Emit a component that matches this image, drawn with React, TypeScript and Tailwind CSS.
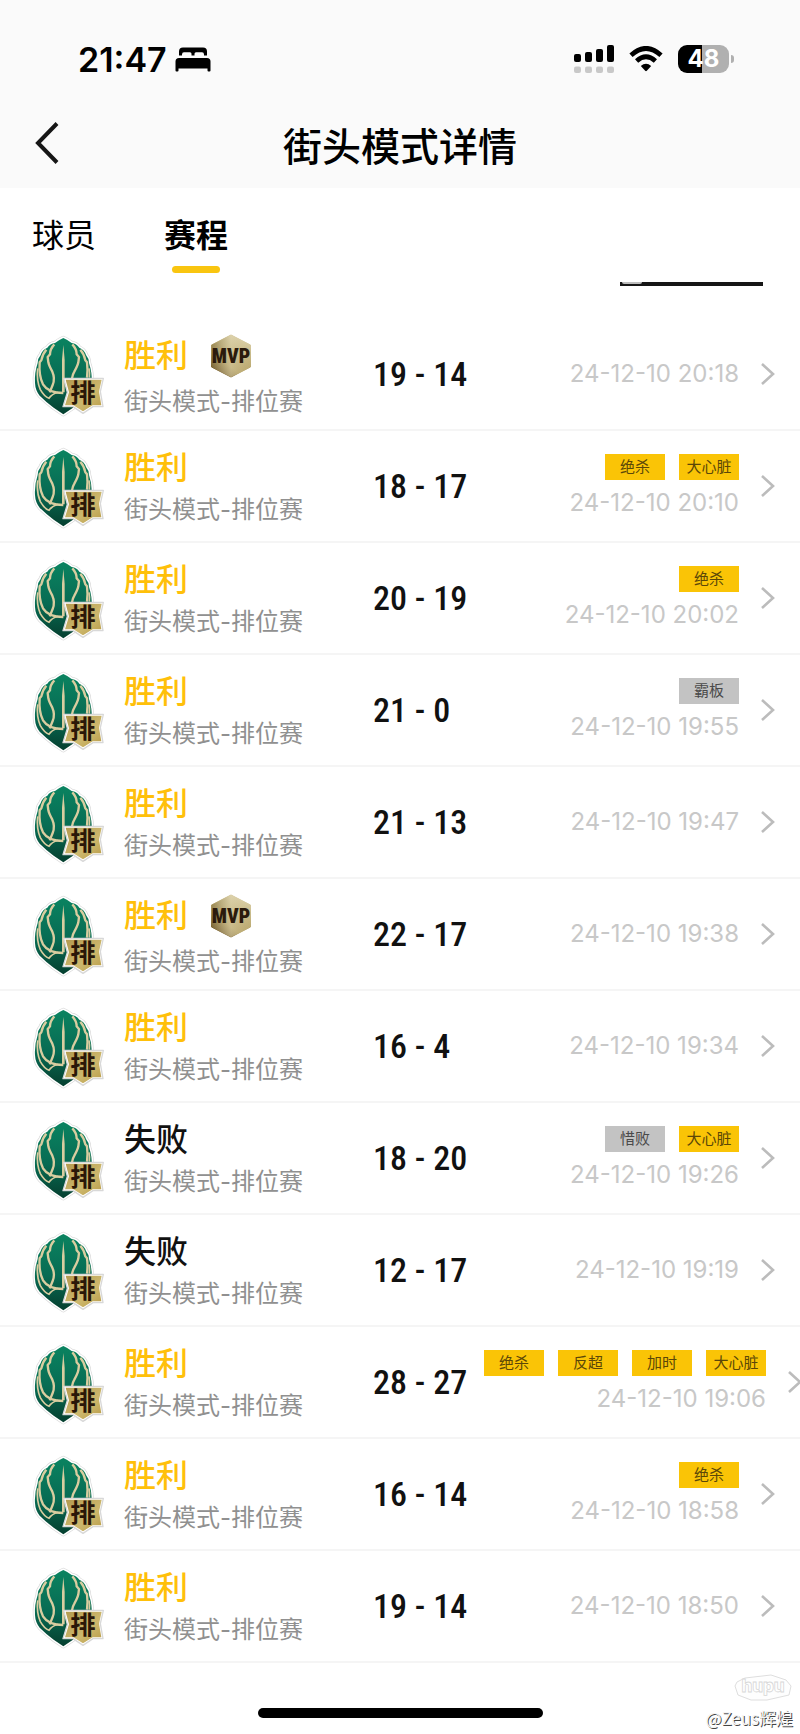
type Tag = { text: string; muted?: boolean };

type Match = {
  won: boolean;
  mvp?: boolean;
  score: string;
  time: string;
  tags?: Tag[];
};

const matches: Match[] = [
  { won: true, mvp: true, score: "19 - 14", time: "24-12-10 20:18" },
  { won: true, score: "18 - 17", time: "24-12-10 20:10", tags: [{ text: "绝杀" }, { text: "大心脏" }] },
  { won: true, score: "20 - 19", time: "24-12-10 20:02", tags: [{ text: "绝杀" }] },
  { won: true, score: "21 - 0", time: "24-12-10 19:55", tags: [{ text: "霸板", muted: true }] },
  { won: true, score: "21 - 13", time: "24-12-10 19:47" },
  { won: true, mvp: true, score: "22 - 17", time: "24-12-10 19:38" },
  { won: true, score: "16 - 4", time: "24-12-10 19:34" },
  { won: false, score: "18 - 20", time: "24-12-10 19:26", tags: [{ text: "惜败", muted: true }, { text: "大心脏" }] },
  { won: false, score: "12 - 17", time: "24-12-10 19:19" },
  {
    won: true,
    score: "28 - 27",
    time: "24-12-10 19:06",
    tags: [{ text: "绝杀" }, { text: "反超" }, { text: "加时" }, { text: "大心脏" }],
  },
  { won: true, score: "16 - 14", time: "24-12-10 18:58", tags: [{ text: "绝杀" }] },
  { won: true, score: "19 - 14", time: "24-12-10 18:50" },
];

function BedIcon() {
  return (
    <svg viewBox="0 0 36 25" className="h-[25px] w-9" aria-hidden="true">
      <path d="M4 8.500V4.500Q4 0.500 8 0.500H28Q32 0.500 32 4.500V8.500H29V7.500Q29 5.300 27 5.300H21Q19.500 5.300 19.500 6.800V8.500H16.500V6.800Q16.500 5.300 15 5.300H9Q7 5.300 7 7.500V8.500Z" />
      <path d="M0.500 14.500Q0.500 11 4 11H32Q35.500 11 35.500 14.500V23.500Q35.500 24.500 34.500 24.500H33.500Q32.500 24.500 32.500 23.500V21.500H3.500V23.500Q3.500 24.500 2.500 24.500H1.500Q0.500 24.500 0.500 23.500Z" />
    </svg>
  );
}

function SignalIcon() {
  return (
    <svg viewBox="0 0 40 28" className="h-7 w-10" aria-hidden="true">
      <rect x="0" y="9" width="7" height="8" rx="2" />
      <rect x="11" y="7" width="7" height="10" rx="2" />
      <rect x="22" y="4" width="7" height="13" rx="2" />
      <rect x="33" y="0" width="7" height="17" rx="2" />
      <g fill="#c8c8c8">
        <rect x="0" y="21.500" width="7" height="6.500" rx="2" />
        <rect x="11" y="21.500" width="7" height="6.500" rx="2" />
        <rect x="22" y="21.500" width="7" height="6.500" rx="2" />
        <rect x="33" y="21.500" width="7" height="6.500" rx="2" />
      </g>
    </svg>
  );
}

function WifiIcon() {
  return (
    <svg viewBox="0 0 34 26" className="h-[26px] w-[34px]" aria-hidden="true">
      <path d="M2 9.200Q17 -4.400 32 9.200" fill="none" stroke="#000" strokeWidth="4.800" />
      <path d="M7.600 15Q17 6.600 26.400 15" fill="none" stroke="#000" strokeWidth="4.800" />
      <path d="M11.800 20Q17 15.400 22.200 20L17.800 24.800Q17 25.600 16.200 24.800Z" />
    </svg>
  );
}

function Battery() {
  return (
    <div className="flex items-center gap-0.5">
      <div className="flex h-7 w-[51px] items-center justify-center rounded-[9px] bg-linear-to-r from-black from-48% to-[#b0b0b0] to-48% text-2xl leading-7 font-bold text-white">
        48
      </div>
      <span className="h-2 w-[3px] rounded-r-full bg-[#b0b0b0]" />
    </div>
  );
}

const LEAF =
  "M131 25Q117 31 106 40Q91 42 83 54Q68 60 63 76Q54 86 54 100Q44 130 46 160Q47 182 60 198Q78 216 102 234L131 254L160 234Q184 216 202 198Q215 182 216 160Q218 130 208 100Q208 86 199 76Q194 60 179 54Q171 42 156 40Q145 31 131 25Z";

function Emblem() {
  return (
    <svg viewBox="40 13 216 240" className="h-20 w-[72px] shrink-0 overflow-visible" aria-hidden="true">
      <defs>
        <linearGradient id="leaf" x1="0" y1="0" x2="0" y2="1">
          <stop offset="0" stopColor="#0a8360" />
          <stop offset="0.55" stopColor="#086b53" />
          <stop offset="1" stopColor="#053f2f" />
        </linearGradient>
        <linearGradient id="ribbon" x1="0" y1="0" x2="1" y2="1">
          <stop offset="0" stopColor="#b39a50" />
          <stop offset="0.6" stopColor="#cdb86d" />
          <stop offset="1" stopColor="#b89b48" />
        </linearGradient>
      </defs>
      <path d={LEAF} fill="none" stroke="#d9d9d9" strokeWidth="13" strokeLinejoin="round" />
      <path d={LEAF} fill="url(#leaf)" stroke="#ffffff" strokeWidth="9" strokeLinejoin="round" />
      <path d={LEAF} fill="url(#leaf)" />
      <g fill="none" stroke="#d9cda0" strokeWidth="7" strokeLinejoin="miter">
        <path d="M104 44Q91 58 91 74L84 82L86 98Q88 108 98 126Q107 146 99 166L90 188" />
        <path d="M158 44Q171 58 171 74L178 82L176 98Q174 108 164 126Q159 134 157 146" />
        <path d="M80 60Q68 74 65 92L60 98Q57 138 70 164Q86 190 131 190" />
        <path d="M182 60Q194 74 197 92L202 98Q205 120 202 144" />
        <path d="M54 116Q50 152 62 180Q74 201 88 206Q96 194 114 188" strokeWidth="5" />
        <path d="M208 116Q211 130 209 144" strokeWidth="5" />
      </g>
      <path d="M131 46L127 90V188H135V90Z" fill="#d9cda0" />
      <path
        d="M132 146H251L242 186L250 231H220L190 251L160 231H130L143 188Z"
        fill="#ffffff"
        stroke="#d8d8d8"
        strokeWidth="4"
        strokeLinejoin="round"
      />
      <path d="M138 150H246L238 186L245 227H219L190 245L161 227H136L148 188Z" fill="url(#ribbon)" />
      <text
        x="190"
        y="217"
        textAnchor="middle"
        fontSize="76"
        fontWeight="700"
        fill="#2a1708"
        className="font-['Noto_Sans_CJK_SC',sans-serif]"
      >
        排
      </text>
    </svg>
  );
}

function MvpBadge() {
  return (
    <svg viewBox="0 0 42 44" className="h-11 w-[42px]" role="img" aria-label="MVP">
      <defs>
        <linearGradient id="mvp" x1="0.9" y1="0" x2="0.2" y2="1">
          <stop offset="0" stopColor="#ddd2ad" />
          <stop offset="0.35" stopColor="#c3b37e" />
          <stop offset="0.7" stopColor="#b09c5e" />
          <stop offset="1" stopColor="#6d5425" />
        </linearGradient>
        <linearGradient id="mvpShine" x1="0" y1="0" x2="1" y2="0">
          <stop offset="0" stopColor="#7c6a3c" stopOpacity="0.5" />
          <stop offset="0.5" stopColor="#f2ebcf" stopOpacity="0.4" />
          <stop offset="1" stopColor="#efe7c8" stopOpacity="0" />
        </linearGradient>
      </defs>
      <path d="M21 1L40.500 11V33L21 43L1.500 33V11Z" fill="url(#mvp)" stroke="url(#mvp)" strokeLinejoin="round" />
      <path d="M21 1L40.500 11V33L21 43L1.500 33V11Z" fill="url(#mvpShine)" />
      <text
        x="21"
        y="29"
        textAnchor="middle"
        fontSize="20"
        fontWeight="900"
        fill="#2b1a0c"
        className="font-['Roboto_Condensed',Roboto,sans-serif]"
      >
        MVP
      </text>
    </svg>
  );
}

function MatchRow({ match }: { match: Match }) {
  return (
    <li>
      <a href="#match" className="flex h-28 items-center overflow-hidden border-b-2 border-[#f5f5f5] pr-[25px] pl-[33px]">
        <Emblem />
        <div className="ml-[19px] w-[249px] shrink-0">
          <div
            className={
              match.mvp
                ? "flex h-14 items-center gap-[22px] text-[32px] font-medium text-[#ffc00a]"
                : match.won
                  ? "flex h-12 items-center text-[32px] font-medium text-[#ffc00a]"
                  : "flex h-12 items-center text-[32px] font-medium text-[#111111]"
            }
          >
            <span className="leading-12">{match.won ? "胜利" : "失败"}</span>
            {match.mvp && <MvpBadge />}
          </div>
          <p className="text-2xl leading-9 font-normal text-[#909090]">街头模式-排位赛</p>
        </div>
        <strong className="w-[111px] shrink-0 font-['Roboto_Condensed',Roboto,sans-serif] text-[34px] font-medium whitespace-nowrap text-[#111111]">
          {match.score}
        </strong>
        <div className="flex flex-1 flex-col items-end gap-2">
          {match.tags && (
            <div className="flex gap-3.5">
              {match.tags.map((tag) => (
                <span
                  key={tag.text}
                  className={
                    tag.muted
                      ? "h-[26px] w-[60px] bg-[#c3c3c3] text-center text-[15px] leading-[26px] text-[#4a4a4a]"
                      : "h-[26px] w-[60px] bg-[#fac406] text-center text-[15px] leading-[26px] text-[#5b4708]"
                  }
                >
                  {tag.text}
                </span>
              ))}
            </div>
          )}
          <time className="text-2xl leading-[30px] font-normal whitespace-nowrap text-[#c8c8c8]">{match.time}</time>
        </div>
        <svg viewBox="0 0 14 24" className="ml-[22px] h-6 w-3.5 shrink-0" aria-hidden="true">
          <path d="M1 2L12 12L1 22" fill="none" stroke="#bcbcbc" strokeWidth="2.600" />
        </svg>
      </a>
    </li>
  );
}

export default function App() {
  return (
    <div className="relative min-h-screen bg-white font-[Inter,'Noto_Sans_CJK_SC',sans-serif] text-black">
      <header className="bg-[#fafafa]">
        <div className="flex h-[105px] items-end justify-between pr-[66px] pl-[78px]">
          <div className="flex h-[92px] items-center gap-2">
            <span className="text-[34px] font-semibold">21:47</span>
            <BedIcon />
          </div>
          <div className="flex h-[92px] items-center gap-[15px]">
            <SignalIcon />
            <WifiIcon />
            <Battery />
          </div>
        </div>
        <div className="grid h-[83px] grid-cols-[1fr_auto_1fr] items-start px-8 pt-[7px]">
          <button type="button" aria-label="返回" className="h-[62px] w-8">
            <svg viewBox="0 0 32 48" className="h-12 w-8" aria-hidden="true">
              <path d="M25 4.500L6 24L25 43.500" fill="none" stroke="#161616" strokeWidth="4" />
            </svg>
          </button>
          <h1 className="text-[39px] leading-[70px] font-medium">街头模式详情</h1>
        </div>
      </header>

      <nav className="flex h-[131px] items-start justify-between pr-[37px] pl-8">
        <div className="flex gap-17 pt-6 text-[32px] leading-12">
          <button type="button" className="flex flex-col items-center font-normal">
            球员
          </button>
          <button type="button" className="flex flex-col items-center gap-1.5 font-bold">
            赛程
            <span className="h-[7px] w-12 rounded-full bg-[#f9c510]" />
          </button>
        </div>
        <div className="mt-[94px] h-1 w-[143px] bg-[#161616] pl-0.5">
          <div className="h-0.5 w-5 rounded-b-sm bg-[#bdbdbd]" />
        </div>
      </nav>

      <main>
        <ul>
          {matches.map((match) => (
            <MatchRow key={match.time} match={match} />
          ))}
        </ul>
      </main>

      <footer className="flex h-[71px] justify-center pt-[45px]">
        <div className="h-2.5 w-[285px] rounded-full bg-black" />
      </footer>

      <div className="absolute right-[7px] bottom-0 flex flex-col items-end">
        <svg viewBox="0 0 60 28" className="h-7 w-[60px]" aria-hidden="true">
          <path
            d="M4 8L12 4L38 1L53 6L58 12L56 21L34 26L18 26L5 21L2 12Z"
            fill="#fefefe"
            stroke="#dedede"
            strokeWidth="1"
          />
          <text
            x="30"
            y="18"
            textAnchor="middle"
            fontSize="17"
            fontWeight="800"
            fill="#ffffff"
            stroke="#d8d8d8"
            strokeWidth="0.8"
            className="font-[Inter,sans-serif]"
          >
            hupu
          </text>
        </svg>
        <p className="font-['Noto_Sans_CJK_SC',sans-serif] text-[17px] leading-8 text-[#f4f4f4] [text-shadow:1px_1px_0px_#444]">
          @Zeus辉煌
        </p>
      </div>
    </div>
  );
}
